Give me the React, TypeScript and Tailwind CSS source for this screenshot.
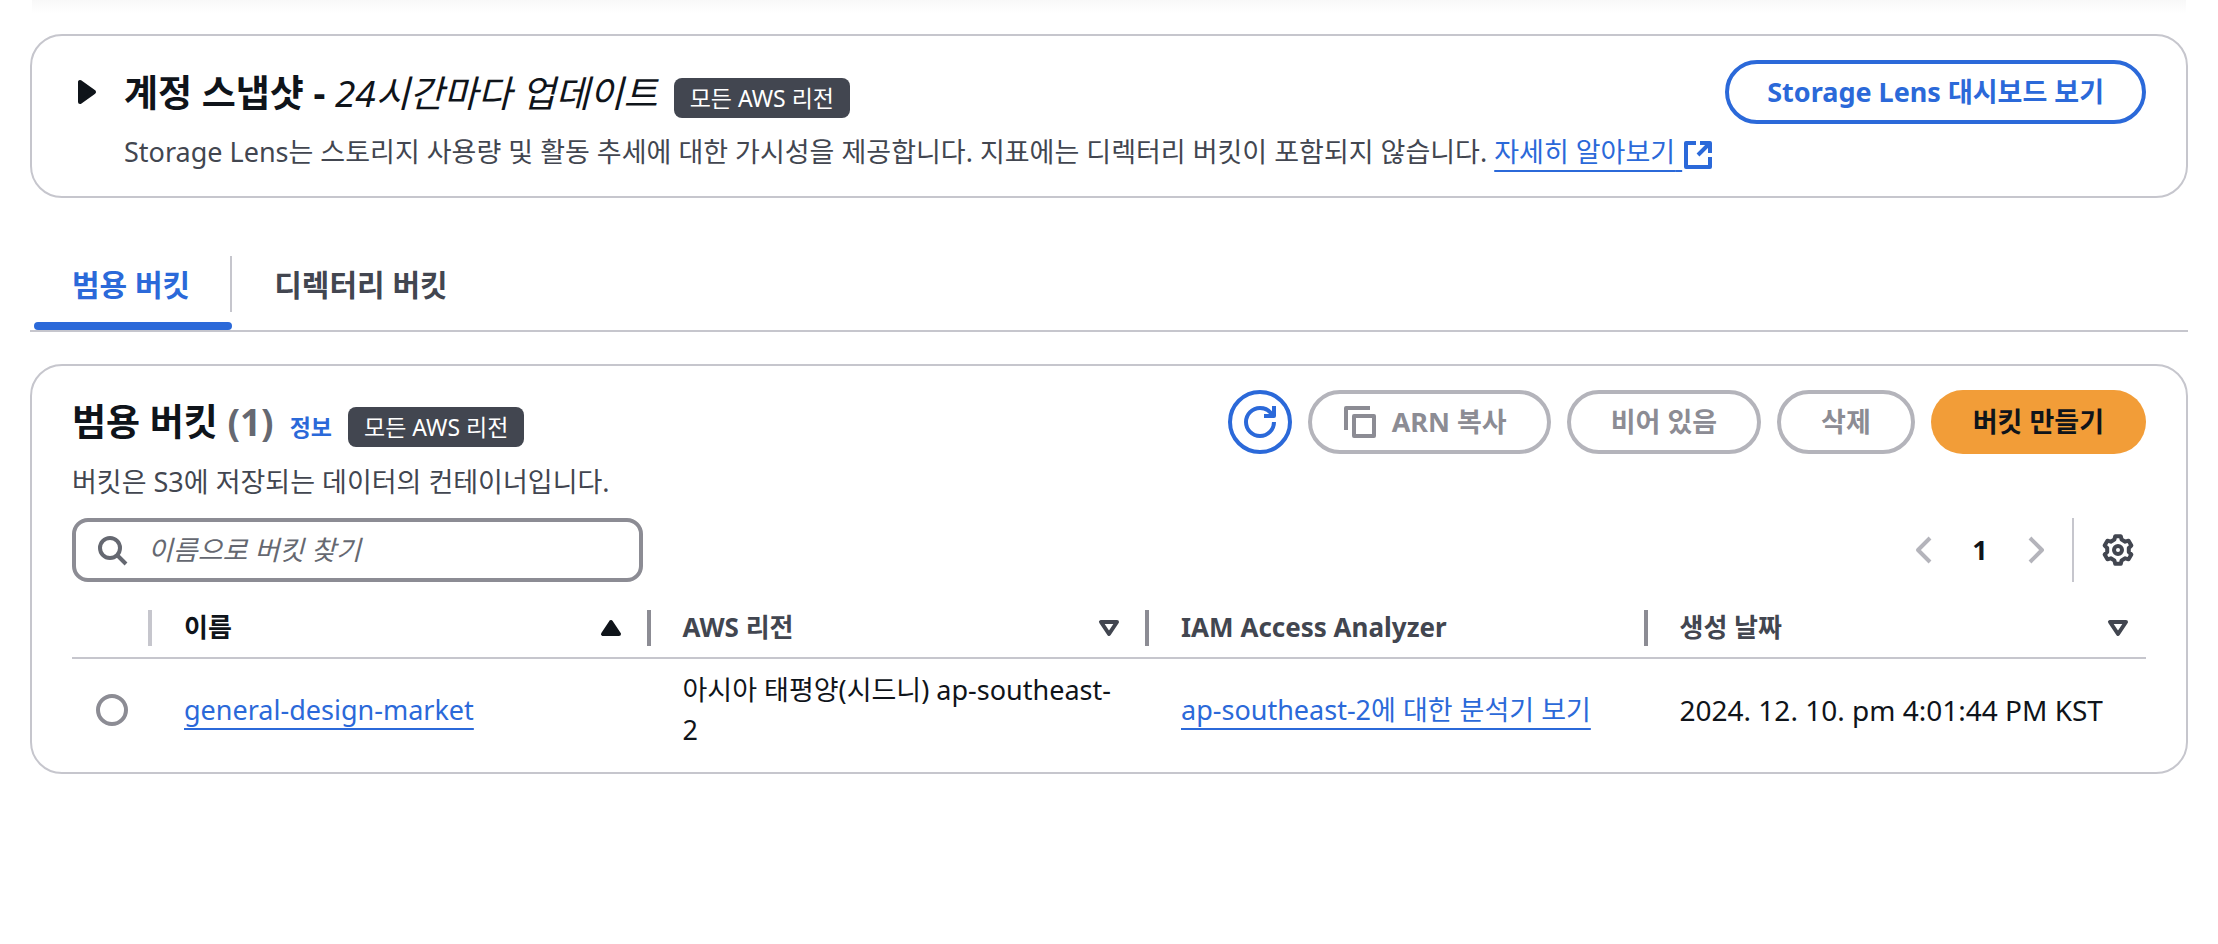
import React, { Fragment, useState } from 'react';

interface Bucket {
  name: string;
  region: string;
  analyzer: string;
  createdAt: string;
}

const buckets: Bucket[] = [
  {
    name: 'general-design-market',
    region: '아시아 태평양(시드니) ap-southeast-2',
    analyzer: 'ap-southeast-2에 대한 분석기 보기',
    createdAt: '2024. 12. 10. pm 4:01:44 PM KST',
  },
];

const columns = [
  { label: '이름', sort: 'asc' },
  { label: 'AWS 리전', sort: 'none' },
  { label: 'IAM Access Analyzer', sort: null },
  { label: '생성 날짜', sort: 'none' },
];

const linkClass =
  'text-[#2b69d9] underline decoration-2 underline-offset-8';

interface IconProps {
  className?: string;
  children: React.ReactNode;
}

const Icon: React.FC<IconProps> = ({ className = 'size-8', children }) => (
  <svg
    viewBox="0 0 16 16"
    className={`shrink-0 ${className}`}
    fill="none"
    stroke="currentColor"
    strokeWidth="2"
    strokeLinejoin="round"
    aria-hidden="true"
  >
    {children}
  </svg>
);

const Badge: React.FC<{ children: React.ReactNode }> = ({ children }) => (
  <span className="flex h-10 items-center rounded-lg bg-[#424650] px-4 text-[23px] text-white">
    {children}
  </span>
);

const SnapshotCard: React.FC = () => (
  <section className="flex items-start justify-between rounded-[32px] border-2 border-[#c6c6cd] px-10 pt-6 pb-[22px]">
    <div className="flex">
      <button aria-label="계정 스냅샷 펼치기" className="flex h-16 w-[52px] items-center text-[#0f141a]">
        <Icon>
          <path d="M4 3v10l7-5z" fill="currentColor" />
        </Icon>
      </button>
      <div>
        <div className="flex h-[66px] items-baseline gap-4">
          <h2 className="text-[37px] leading-[66px] font-bold text-[#0f141a]">
            계정 스냅샷 - <em className="font-normal">24시간마다 업데이트</em>
          </h2>
          <Badge>모든 AWS 리전</Badge>
        </div>
        <p className="mt-1 text-[27px] leading-[44px] text-[#424650]">
          Storage Lens는 스토리지 사용량 및 활동 추세에 대한 가시성을 제공합니다. 지표에는 디렉터리 버킷이 포함되지 않습니다.{' '}
          <a href="#" className={linkClass}>
            자세히 알아보기{' '}
            <Icon className="inline size-8">
              <path d="M14 9v5H2V2h5M9 2h5v5M14 2 8 8" />
            </Icon>
          </a>
        </p>
      </div>
    </div>
    <button className="h-16 rounded-full border-4 border-[#2b69d9] px-[38px] text-[27px] font-bold text-[#2b69d9]">
      Storage Lens 대시보드 보기
    </button>
  </section>
);

const SortIcon: React.FC<{ sort: string }> = ({ sort }) => (
  <Icon>
    {sort === 'asc' ? (
      <path d="M4 11h8L8 5z" fill="currentColor" />
    ) : (
      <path d="M4 5h8l-4 6z" />
    )}
  </Icon>
);

const BucketTable: React.FC = () => {
  const [selected, setSelected] = useState('');

  return (
    <table className="w-full table-fixed text-[27px]">
      <colgroup>
        <col className="w-20" />
        <col />
        <col />
        <col />
        <col />
      </colgroup>
      <thead>
        <tr className="border-b-2 border-[#c6c6cd] text-[26px]">
          <td className="h-[76px] p-0 pt-4">
            <div className="ml-auto h-9 w-1 bg-[#c6c6cd]" />
          </td>
          {columns.map((col, i) => (
            <th key={col.label} className="h-[76px] p-0 pt-4 pl-8 text-left">
              <div className={`flex items-center ${i === 0 ? 'text-[#0f141a]' : 'text-[#424650]'}`}>
                <span className="flex-1">{col.label}</span>
                {col.sort && (
                  <button aria-label={`${col.label} 정렬`} className={i === 3 ? 'mr-3' : 'mr-5'}>
                    <SortIcon sort={col.sort} />
                  </button>
                )}
                {i < 3 && <div className="h-9 w-1 bg-[#8c8c94]" />}
              </div>
            </th>
          ))}
        </tr>
      </thead>
      <tbody>
        {buckets.map(bucket => (
          <tr key={bucket.name} className="leading-10 text-[#0f141a]">
            <td className="h-[102px] p-0 pl-6">
              <input
                type="radio"
                name="bucket"
                aria-label={bucket.name}
                checked={selected === bucket.name}
                onChange={() => setSelected(bucket.name)}
                className="block size-8 appearance-none rounded-full border-4 border-[#8c8c94] checked:border-[10px] checked:border-[#2b69d9]"
              />
            </td>
            <td className="p-0 pr-8 pl-8">
              <a href="#" className={linkClass}>{bucket.name}</a>
            </td>
            <td className="p-0 pr-8 pl-8">
              {/* region codes may wrap after any hyphen */}
              {bucket.region.split('-').map((part, i) => (
                <Fragment key={i}>
                  {i > 0 && <>-<wbr /></>}
                  {part}
                </Fragment>
              ))}
            </td>
            <td className="p-0 pr-8 pl-8">
              <a href="#" className={linkClass}>{bucket.analyzer}</a>
            </td>
            <td className="p-0 pr-8 pl-8 text-[28px]">{bucket.createdAt}</td>
          </tr>
        ))}
      </tbody>
    </table>
  );
};

const disabledButton =
  'flex h-16 items-center gap-4 rounded-full border-4 border-[#b4b4bb] text-[27px] font-bold text-[#8c8c94]';

const BucketsCard: React.FC = () => (
  <section className="mt-8 rounded-[32px] border-2 border-[#c6c6cd] px-10 pt-6 pb-3">
    <div className="flex items-start justify-between">
      <div className="flex h-16 items-baseline gap-4">
        <h2 className="text-[37px] leading-[64px] font-bold text-[#0f141a]">
          범용 버킷 <span className="text-[#656871]">(1)</span>
        </h2>
        <a href="#" className="text-[23px] font-bold text-[#2b69d9]">정보</a>
        <Badge>모든 AWS 리전</Badge>
      </div>
      <div className="flex gap-4">
        <button aria-label="새로 고침" className="flex size-16 items-center justify-center rounded-full border-4 border-[#2b69d9] text-[#2b69d9]">
          <Icon>
            <path d="M15 8c0 3.87-3.13 7-7 7s-7-3.13-7-7 3.13-7 7-7c2.79 0 5.2 1.63 6.33 4M10 5h5V0" />
          </Icon>
        </button>
        <button disabled className={`${disabledButton} pr-10 pl-8`}>
          <Icon>
            <path d="M1 12V1h12M5 5h10v10H5z" />
          </Icon>
          ARN 복사
        </button>
        <button disabled className={`${disabledButton} px-10`}>비어 있음</button>
        <button disabled className={`${disabledButton} px-10`}>삭제</button>
        <button className="h-16 rounded-full bg-[#f29d38] px-[42px] text-[27px] font-bold text-[#0f141a]">
          버킷 만들기
        </button>
      </div>
    </div>
    <p className="text-[27px] leading-[56px] text-[#424650]">
      버킷은 S3에 저장되는 데이터의 컨테이너입니다.
    </p>
    <div className="mt-2 flex h-16 items-center justify-between">
      <label className="flex h-16 w-[571px] items-center gap-5 rounded-2xl border-4 border-[#8c8c94] px-5 text-[#656871]">
        <Icon>
          <path d="M7 12a5 5 0 1 0 0-10 5 5 0 0 0 0 10ZM10.5 10.5 15 15" />
        </Icon>
        <input
          type="text"
          aria-label="이름으로 버킷 찾기"
          placeholder="이름으로 버킷 찾기"
          className="w-full text-[27px] outline-none placeholder:text-[#656871] placeholder:italic"
        />
      </label>
      <div className="flex items-center">
        <button disabled aria-label="이전 페이지" className="text-[#b4b4bb]">
          <Icon><path d="m11 2-6 6 6 6" /></Icon>
        </button>
        <button aria-current="page" className="w-20 text-[27px] font-bold text-[#0f141a]">1</button>
        <button disabled aria-label="다음 페이지" className="text-[#b4b4bb]">
          <Icon><path d="m5 2 6 6-6 6" /></Icon>
        </button>
        <div className="mr-7 ml-5 h-16 w-0.5 bg-[#c6c6cd]" />
        <button aria-label="기본 설정" className="mr-3 text-[#424650]">
          <Icon>
            <path d="M6.6 1.1h2.8l.4 1.7 1.8 1.04 1.68-.5 1.4 2.42-1.28 1.2v2.08l1.28 1.2-1.4 2.42-1.68-.5-1.8 1.04-.4 1.7H6.6l-.4-1.7-1.8-1.04-1.68.5-1.4-2.42 1.28-1.2V6.96L1.32 5.76l1.4-2.42 1.68.5L6.2 2.8z" />
            <circle cx="8" cy="8" r="2" />
          </Icon>
        </button>
      </div>
    </div>
    <BucketTable />
  </section>
);

const App: React.FC = () => {
  const [activeTab, setActiveTab] = useState(0);
  const tabs = ['범용 버킷', '디렉터리 버킷'];

  return (
    <div lang="ko" className="min-h-screen bg-white font-['Noto_Sans','Noto_Sans_CJK_KR',sans-serif]">
      <div className="mx-8 h-[34px] bg-linear-to-b from-[#f8f8f8] to-white to-40%" />
      <main className="mx-[30px]">
        <SnapshotCard />
        <div role="tablist" className="mt-[50px] flex border-b-2 border-[#c6c6cd]">
          {tabs.map((tab, i) => (
            <button
              key={tab}
              role="tab"
              aria-selected={activeTab === i}
              onClick={() => setActiveTab(i)}
              className="group ml-1 text-[30px] font-bold text-[#424650] aria-selected:text-[#2b69d9]"
            >
              <span className="my-2 flex h-14 items-center border-[#c6c6cd] pr-10 pl-[38px] group-first:border-r-2">{tab}</span>
              <span className="mt-[10px] block h-2 rounded-full group-aria-selected:bg-[#2b69d9]" />
            </button>
          ))}
        </div>
        <BucketsCard />
      </main>
    </div>
  );
};

export default App;
